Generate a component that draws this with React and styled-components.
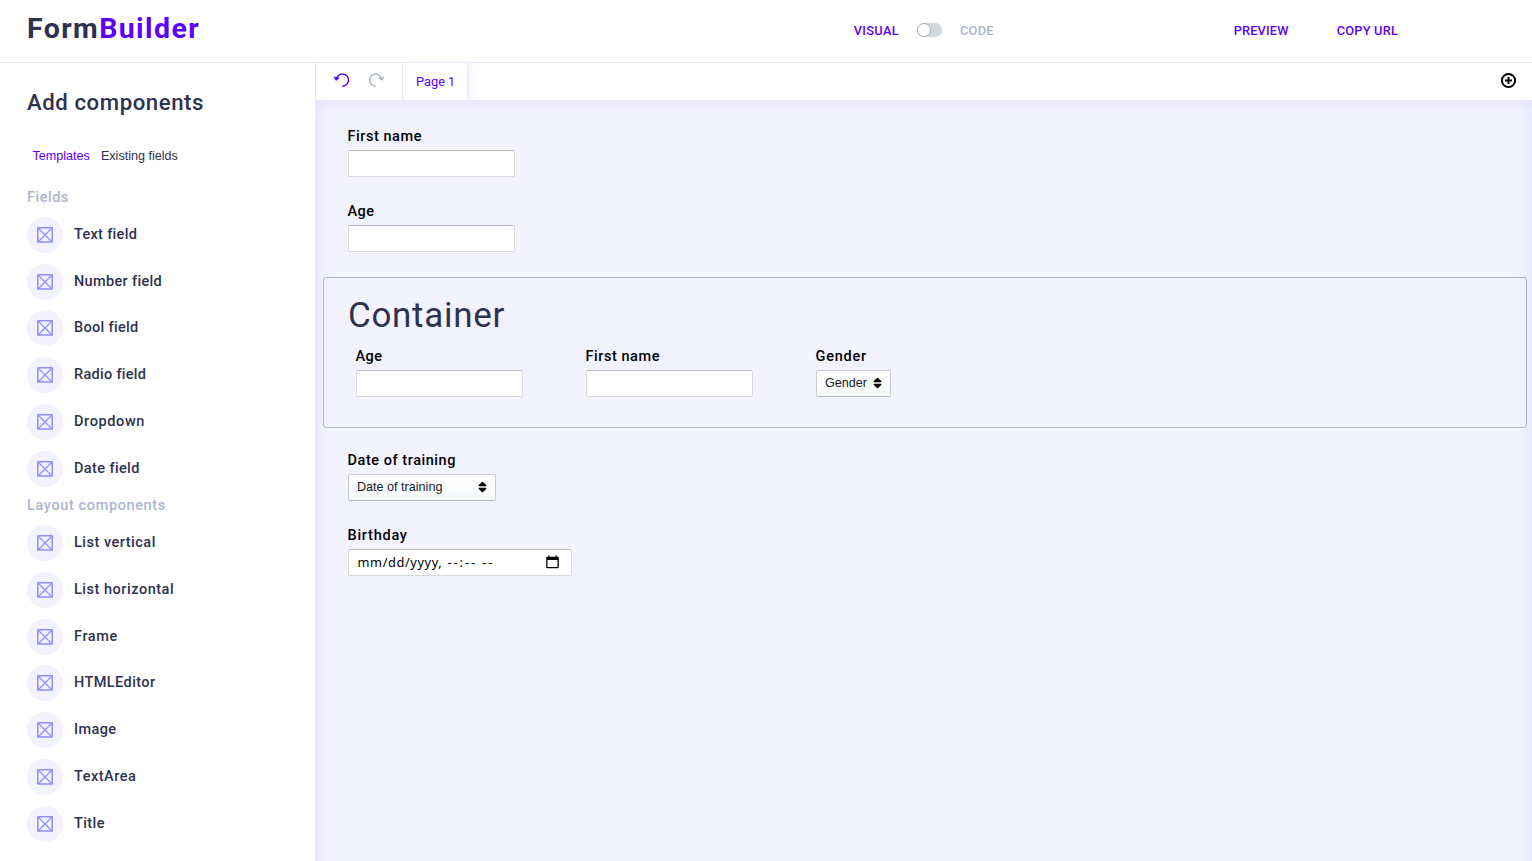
import React from "react";
import styled, { createGlobalStyle } from "styled-components";

const GlobalStyle = createGlobalStyle`
  *, *::before, *::after { box-sizing: border-box; }
  html, body, #root { height: 100%; }
  body {
    margin: 0;
    overflow: hidden;
    background: #fff;
    color: #2e3250;
    font-family: Roboto, "Liberation Sans", sans-serif;
    font-size: 14.5px;
  }
`;

const Screen = styled.div`
  display: flex;
  flex-direction: column;
  height: 861px;
  overflow: hidden;
`;

const Header = styled.header`
  flex: none;
  display: flex;
  align-items: center;
  height: 63px;
  padding: 0 134px 2px 27px;
  border-bottom: 1px solid #e8e7ff;
`;

const Logo = styled.h1`
  margin: 0 auto 2px 0;
  font-size: 28.5px;
  line-height: 34px;
  font-weight: 700;
  letter-spacing: ${(p) => p.$ls}px;
  white-space: nowrap;
  span { color: #5c00ff; }
`;

const ModeSwitch = styled.div`
  display: flex;
  align-items: center;
  width: 380px;
`;

const HeaderLabel = styled.span`
  padding-top: 2px;
  font-size: 12.8px;
  line-height: 16px;
  font-weight: 500;
  white-space: nowrap;
  letter-spacing: ${(p) => p.$ls || 0}px;
  color: ${(p) => (p.$muted ? "#adb5cb" : "#5c00ff")};
`;

const Toggle = styled.span`
  width: 25px;
  height: 14px;
  margin: 0 18px;
  border-radius: 7px;
  background: #d1d8e0;
  display: flex;
  align-items: center;
  &::before {
    content: "";
    width: 14px;
    height: 14px;
    border-radius: 50%;
    border: 1px solid #a5afba;
    background: #fff;
  }
`;

const HeaderActions = styled.div`
  display: flex;
  gap: 48px;
`;

const Body = styled.div`
  flex: 1;
  min-height: 0;
  display: flex;
`;

const Sidebar = styled.aside`
  flex: none;
  width: 316px;
  padding: 24px 27px 0;
  border-right: 1px solid #e8e7ff;
`;

const SidebarTitle = styled.h2`
  margin: 0;
  font-size: 22.2px;
  line-height: 30px;
  font-weight: 500;
  white-space: nowrap;
  letter-spacing: ${(p) => p.$ls}px;
`;

const SidebarTabs = styled.nav`
  display: flex;
  gap: 11px;
  padding: 31px 0 0 5.5px;
  font: 12.6px/16px "Liberation Sans", Arial, sans-serif;
`;

const SidebarTab = styled.span`
  color: ${(p) => (p.$active ? "#5c00ff" : "#2e3250")};
  white-space: nowrap;
`;

const GroupTitle = styled.h3`
  margin: 0;
  height: 20px;
  line-height: 22px;
  font-size: 14.5px;
  font-weight: 500;
  color: #adb5cb;
  letter-spacing: ${(p) => p.$ls || 0}px;
`;

const Group = styled.section`
  padding-top: ${(p) => p.$top}px;
`;

const ComponentList = styled.ul`
  list-style: none;
  margin: 0;
  padding: 10px 0 0;
  display: flex;
  flex-direction: column;
  gap: 10.75px;
`;

const ComponentRow = styled.li`
  display: flex;
  align-items: center;
  gap: 11px;
  height: 36px;
`;

const IconBadge = styled.span`
  width: 36px;
  height: 36px;
  border-radius: 50%;
  background: #f3f2ff;
  display: flex;
  align-items: center;
  justify-content: center;
`;

const ComponentName = styled.span`
  line-height: 18px;
  font-weight: 500;
  white-space: nowrap;
  letter-spacing: ${(p) => p.$ls || 0}px;
`;

const Main = styled.main`
  flex: 1;
  min-width: 0;
  display: flex;
  flex-direction: column;
`;

const Toolbar = styled.div`
  flex: none;
  display: flex;
  height: 37px;
`;

const History = styled.div`
  display: flex;
  gap: 18px;
  width: 87px;
  padding: 9px 0 0 17px;
  border-right: 1px solid #e8e7ff;
`;

const PageTab = styled.div`
  width: 65px;
  padding-left: 13px;
  line-height: 37px;
  font-size: 12.8px;
  color: #5c00ff;
  border-right: 1px solid #e8e7ff;
  box-shadow: 4px 0 8px #f3f2ff;
`;

const AddPage = styled.div`
  margin: 9px 15px 0 auto;
`;

const Canvas = styled.div`
  flex: none;
  height: 900px;
  padding: 26px 5px 0 7px;
  background: #f3f2ff;
  box-shadow: inset 0 0 16px #dfdefd;
  color: #000;
`;

const Field = styled.div`
  margin-left: ${(p) => (p.$inset ? 0 : 25)}px;
  height: 75.25px;
  width: ${(p) => (p.$inset ? "230px" : "auto")};
`;

const FieldLabel = styled.div`
  height: 24px;
  line-height: 22px;
  margin-left: -0.5px;
  font-weight: 500;
  white-space: nowrap;
  letter-spacing: ${(p) => p.$ls || 0.5}px;
`;

const TextInput = styled.div`
  width: ${(p) => p.$width || 167}px;
  height: 27px;
  border: 1px solid #d9d9de;
  border-top-color: #babac0;
  border-radius: 2px;
  background: #fff;
`;

const DateInput = styled(TextInput)`
  display: flex;
  align-items: center;
  padding: 0 12px 0 8.5px;
  font: 12.8px/16px "Noto Sans", sans-serif;
  svg { margin-left: auto; }
`;

const DatePart = styled.span`
  white-space: pre;
  letter-spacing: ${(p) => p.$ls}px;
`;

const Select = styled.div`
  display: flex;
  align-items: center;
  justify-content: space-between;
  width: ${(p) => p.$width}px;
  height: 27px;
  padding: 0 8px 1px;
  border: 1px solid #cbccd1;
  border-bottom-color: #b5b7bd;
  border-radius: 2px;
  background: linear-gradient(#fff, #f5f8fa);
  font: 12.6px/16px "Liberation Sans", Arial, sans-serif;
  color: #182026;
`;

const Container = styled.section`
  height: 151px;
  margin-bottom: 22px;
  padding: 16px 24px 0;
  border: 1px solid #adb5cb;
  border-radius: 3px;
`;

const ContainerTitle = styled.h2`
  margin: 0;
  height: 52.5px;
  line-height: 43px;
  font-size: 35px;
  font-weight: 400;
  color: #2e3250;
  letter-spacing: ${(p) => p.$ls}px;
`;

const ContainerRow = styled.div`
  display: flex;
  padding-left: 8px;
`;

const CrossBox = () => (
  <svg width="16" height="16" viewBox="0 0 16 16" fill="none" stroke="#8f8dff">
    <rect x="0.8" y="0.8" width="14.4" height="14.2" rx="0.5" strokeWidth="1.5" />
    <path d="M1 1L15 15M15 1L1 15" strokeWidth="1.2" />
  </svg>
);

const UndoIcon = ({ color, flip }) => (
  <svg width="17" height="16" viewBox="0 0 17 16" fill="none" stroke={color} strokeWidth="1.4">
    <g transform={flip ? "translate(17 0) scale(-1 1)" : undefined}>
      <path d="M3.3 7.6A6.1 6.1 0 1 1 9.2 14.2" />
      <path d="M0.9 5L3 8.4L6.4 6Z" fill={color} strokeWidth="0.6" />
    </g>
  </svg>
);

const AddIcon = () => (
  <svg width="17" height="17" viewBox="0 0 17 17" fill="none" stroke="#000" strokeWidth="2">
    <circle cx="8.5" cy="8.5" r="6.6" />
    <path d="M8.5 5V12M5 8.5H12" />
  </svg>
);

const Carets = () => (
  <svg width="9" height="12" viewBox="0 0 9 12" fill="#000">
    <path d="M1 5.2Q0.2 4.8 0.8 4L3.9 0.9Q4.5 0.4 5.1 0.9L8.2 4Q8.8 4.8 8 5.2Z" />
    <path d="M1 6.8Q0.2 7.2 0.8 8L3.9 11.1Q4.5 11.6 5.1 11.1L8.2 8Q8.8 7.2 8 6.8Z" />
  </svg>
);

const CalendarIcon = () => (
  <svg width="13" height="14" viewBox="0 0 13 14">
    <path
      fill="#000"
      fillRule="evenodd"
      d="M2.2 0.5H3.6V1.8H9.4V0.5H10.8V1.8H11.6Q12.8 1.8 12.8 3V12Q12.8 13.2 11.6 13.2H1.4Q0.2 13.2 0.2 12V3Q0.2 1.8 1.4 1.8H2.2ZM1.5 5V11.9H11.5V5Z"
    />
  </svg>
);

const fieldItems = [
  ["Text field", 0.3],
  ["Number field", 0.33],
  ["Bool field", 0.31],
  ["Radio field", 0.29],
  ["Dropdown", 0.62],
  ["Date field", 0.38],
];

const layoutItems = [
  ["List vertical", 0.5],
  ["List horizontal", 0.52],
  ["Frame", 0.6],
  ["HTMLEditor", 0.42],
  ["Image", 0.4],
  ["TextArea", 0.5],
  ["Title", 0.4],
];

const Items = ({ items }) => (
  <ComponentList>
    {items.map(([name, spacing]) => (
      <ComponentRow key={name}>
        <IconBadge>
          <CrossBox />
        </IconBadge>
        <ComponentName $ls={spacing}>{name}</ComponentName>
      </ComponentRow>
    ))}
  </ComponentList>
);

export default function App() {
  return (
    <>
      <GlobalStyle />
      <Screen>
        <Header>
          <Logo $ls={1.4}>
            Form<span>Builder</span>
          </Logo>
          <ModeSwitch>
            <HeaderLabel $ls={0.35}>VISUAL</HeaderLabel>
            <Toggle />
            <HeaderLabel $muted $ls={0.25}>CODE</HeaderLabel>
          </ModeSwitch>
          <HeaderActions>
            <HeaderLabel $ls={0.18}>PREVIEW</HeaderLabel>
            <HeaderLabel $ls={0.2}>COPY URL</HeaderLabel>
          </HeaderActions>
        </Header>
        <Body>
          <Sidebar>
            <SidebarTitle $ls={0.56}>Add components</SidebarTitle>
            <SidebarTabs>
              <SidebarTab $active>Templates</SidebarTab>
              <SidebarTab>Existing fields</SidebarTab>
            </SidebarTabs>
            <Group $top={22.9}>
              <GroupTitle $ls={0.5}>Fields</GroupTitle>
              <Items items={fieldItems} />
            </Group>
            <Group $top={8.55}>
              <GroupTitle $ls={0.62}>Layout components</GroupTitle>
              <Items items={layoutItems} />
            </Group>
          </Sidebar>
          <Main>
            <Toolbar>
              <History>
                <UndoIcon color="#5c00ff" />
                <UndoIcon color="#adb5cb" flip />
              </History>
              <PageTab>Page 1</PageTab>
              <AddPage>
                <AddIcon />
              </AddPage>
            </Toolbar>
            <Canvas>
              <Field>
                <FieldLabel $ls={0.55}>First name</FieldLabel>
                <TextInput />
              </Field>
              <Field>
                <FieldLabel>Age</FieldLabel>
                <TextInput />
              </Field>
              <Container>
                <ContainerTitle $ls={0.68}>Container</ContainerTitle>
                <ContainerRow>
                  <Field $inset>
                    <FieldLabel>Age</FieldLabel>
                    <TextInput />
                  </Field>
                  <Field $inset>
                    <FieldLabel $ls={0.55}>First name</FieldLabel>
                    <TextInput />
                  </Field>
                  <Field $inset>
                    <FieldLabel $ls={0.75}>Gender</FieldLabel>
                    <Select $width={75}>
                      Gender
                      <Carets />
                    </Select>
                  </Field>
                </ContainerRow>
              </Container>
              <Field>
                <FieldLabel $ls={0.55}>Date of training</FieldLabel>
                <Select $width={148}>
                  Date of training
                  <Carets />
                </Select>
              </Field>
              <Field>
                <FieldLabel $ls={0.75}>Birthday</FieldLabel>
                <DateInput $width={224}>
                  <DatePart $ls={0.6}>mm/dd/yyyy,</DatePart>
                  <DatePart $ls={1.9}> --:-- --</DatePart>
                  <CalendarIcon />
                </DateInput>
              </Field>
            </Canvas>
          </Main>
        </Body>
      </Screen>
    </>
  );
}
